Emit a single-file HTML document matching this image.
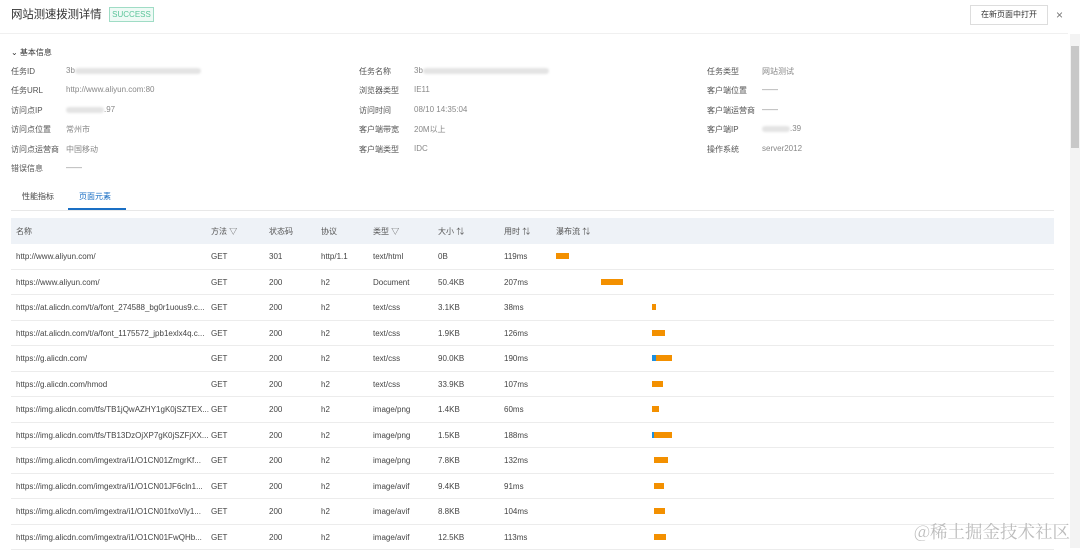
<!DOCTYPE html>
<html><head><meta charset="utf-8"><style>
*{margin:0;padding:0;box-sizing:border-box}
body{width:1080px;height:548px;overflow:hidden;background:#fff;font-family:"Liberation Sans","Noto Sans CJK SC",sans-serif;color:#333;position:relative}
.a{position:absolute;white-space:nowrap}
.s{font-size:8px}
.l{color:#555;font-size:8px}
.v{color:#888;font-size:8px}
.blur{display:inline-block;height:6px;background:#e4e4e4;border-radius:3px;vertical-align:middle;filter:blur(1px)}
.row{position:absolute;left:11px;width:1043px;height:25.5px;border-bottom:1px solid #ececec;font-size:8px;color:#444}
.row span{position:absolute;top:8px;white-space:nowrap}
.bar{position:absolute;top:9px;height:6px;background:#f39000}
.blue{background:#1e90e0}
</style></head><body>
<div class="a" style="left:11px;top:6px;font-size:11.5px;color:#333;letter-spacing:-0.2px">网站测速拨测详情</div>
<div class="a" style="left:109px;top:7px;width:45px;height:15px;border:1px solid #9fdcc5;background:#eefaf5;color:#5bc49a;font-size:8px;line-height:13px;text-align:center">SUCCESS</div>
<div class="a" style="left:970px;top:5px;width:78px;height:20px;border:1px solid #ddd;font-size:8px;line-height:18px;text-align:center;color:#333">在新页面中打开</div>
<div class="a" style="left:1056px;top:8px;font-size:12px;color:#777">×</div>
<div class="a" style="left:0;top:33px;width:1068px;height:1px;background:#f0f0f0"></div>
<div class="a" style="left:1070px;top:34px;width:10px;height:514px;background:#f3f3f3"></div>
<div class="a" style="left:1071px;top:46px;width:8px;height:102px;background:#c8c8c8"></div>

<div class="a s" style="left:11px;top:47px;color:#333">⌄ 基本信息</div>
<div class="a l" style="left:11px;top:66px">任务ID</div><div class="a v" style="left:66px;top:66px">3b<span class="blur" style="width:126px"></span></div>
<div class="a l" style="left:11px;top:85px">任务URL</div><div class="a v" style="left:66px;top:85px">http://www.aliyun.com:80</div>
<div class="a l" style="left:11px;top:105px">访问点IP</div><div class="a v" style="left:66px;top:105px"><span class="blur" style="width:38px"></span>.97</div>
<div class="a l" style="left:11px;top:124px">访问点位置</div><div class="a v" style="left:66px;top:124px">常州市</div>
<div class="a l" style="left:11px;top:144px">访问点运营商</div><div class="a v" style="left:66px;top:144px">中国移动</div>
<div class="a l" style="left:11px;top:163px">错误信息</div><div class="a v" style="left:66px;top:163px">——</div>

<div class="a l" style="left:359px;top:66px">任务名称</div><div class="a v" style="left:414px;top:66px">3b<span class="blur" style="width:126px"></span></div>
<div class="a l" style="left:359px;top:85px">浏览器类型</div><div class="a v" style="left:414px;top:85px">IE11</div>
<div class="a l" style="left:359px;top:105px">访问时间</div><div class="a v" style="left:414px;top:105px">08/10 14:35:04</div>
<div class="a l" style="left:359px;top:124px">客户端带宽</div><div class="a v" style="left:414px;top:124px">20M以上</div>
<div class="a l" style="left:359px;top:144px">客户端类型</div><div class="a v" style="left:414px;top:144px">IDC</div>

<div class="a l" style="left:707px;top:66px">任务类型</div><div class="a v" style="left:762px;top:66px">网站测试</div>
<div class="a l" style="left:707px;top:85px">客户端位置</div><div class="a v" style="left:762px;top:85px">——</div>
<div class="a l" style="left:707px;top:105px">客户端运营商</div><div class="a v" style="left:762px;top:105px">——</div>
<div class="a l" style="left:707px;top:124px">客户端IP</div><div class="a v" style="left:762px;top:124px"><span class="blur" style="width:28px"></span>.39</div>
<div class="a l" style="left:707px;top:144px">操作系统</div><div class="a v" style="left:762px;top:144px">server2012</div>

<div class="a s" style="left:22px;top:191px;color:#444">性能指标</div>
<div class="a s" style="left:79px;top:191px;color:#1a6fc4">页面元素</div>
<div class="a" style="left:68px;top:208px;width:58px;height:2px;background:#1a6fc4"></div>
<div class="a" style="left:11px;top:210px;width:1043px;height:1px;background:#e8e8e8"></div>

<div class="row" style="top:218px;background:#eef2f7;border:none;color:#555">
<span style="left:5px">名称</span><span style="left:200px">方法 ▽</span><span style="left:258px">状态码</span><span style="left:310px">协议</span><span style="left:362px">类型 ▽</span><span style="left:427px">大小 ⇅</span><span style="left:493px">用时 ⇅</span><span style="left:545px">瀑布流 ⇅</span></div>

<div class="row" style="top:244px"><span style="left:5px">http://www.aliyun.com/</span><span style="left:200px">GET</span><span style="left:258px">301</span><span style="left:310px">http/1.1</span><span style="left:362px">text/html</span><span style="left:427px">0B</span><span style="left:493px">119ms</span><div class="bar" style="left:545px;width:13px"></div></div>
<div class="row" style="top:269.5px"><span style="left:5px">https://www.aliyun.com/</span><span style="left:200px">GET</span><span style="left:258px">200</span><span style="left:310px">h2</span><span style="left:362px">Document</span><span style="left:427px">50.4KB</span><span style="left:493px">207ms</span><div class="bar" style="left:590px;width:22px"></div></div>
<div class="row" style="top:295px"><span style="left:5px">https://at.alicdn.com/t/a/font_274588_bg0r1uous9.c...</span><span style="left:200px">GET</span><span style="left:258px">200</span><span style="left:310px">h2</span><span style="left:362px">text/css</span><span style="left:427px">3.1KB</span><span style="left:493px">38ms</span><div class="bar" style="left:641px;width:4px"></div></div>
<div class="row" style="top:320.5px"><span style="left:5px">https://at.alicdn.com/t/a/font_1175572_jpb1exlx4q.c...</span><span style="left:200px">GET</span><span style="left:258px">200</span><span style="left:310px">h2</span><span style="left:362px">text/css</span><span style="left:427px">1.9KB</span><span style="left:493px">126ms</span><div class="bar" style="left:641px;width:13px"></div></div>
<div class="row" style="top:346px"><span style="left:5px">https://g.alicdn.com/</span><span style="left:200px">GET</span><span style="left:258px">200</span><span style="left:310px">h2</span><span style="left:362px">text/css</span><span style="left:427px">90.0KB</span><span style="left:493px">190ms</span><div class="bar blue" style="left:641px;width:4px"></div><div class="bar" style="left:645px;width:16px"></div></div>
<div class="row" style="top:371.5px"><span style="left:5px">https://g.alicdn.com/hmod</span><span style="left:200px">GET</span><span style="left:258px">200</span><span style="left:310px">h2</span><span style="left:362px">text/css</span><span style="left:427px">33.9KB</span><span style="left:493px">107ms</span><div class="bar" style="left:641px;width:11px"></div></div>
<div class="row" style="top:397px"><span style="left:5px">https://img.alicdn.com/tfs/TB1jQwAZHY1gK0jSZTEX...</span><span style="left:200px">GET</span><span style="left:258px">200</span><span style="left:310px">h2</span><span style="left:362px">image/png</span><span style="left:427px">1.4KB</span><span style="left:493px">60ms</span><div class="bar" style="left:641px;width:7px"></div></div>
<div class="row" style="top:422.5px"><span style="left:5px">https://img.alicdn.com/tfs/TB13DzOjXP7gK0jSZFjXX...</span><span style="left:200px">GET</span><span style="left:258px">200</span><span style="left:310px">h2</span><span style="left:362px">image/png</span><span style="left:427px">1.5KB</span><span style="left:493px">188ms</span><div class="bar blue" style="left:641px;width:2px"></div><div class="bar" style="left:643px;width:18px"></div></div>
<div class="row" style="top:448px"><span style="left:5px">https://img.alicdn.com/imgextra/i1/O1CN01ZmgrKf...</span><span style="left:200px">GET</span><span style="left:258px">200</span><span style="left:310px">h2</span><span style="left:362px">image/png</span><span style="left:427px">7.8KB</span><span style="left:493px">132ms</span><div class="bar" style="left:643px;width:14px"></div></div>
<div class="row" style="top:473.5px"><span style="left:5px">https://img.alicdn.com/imgextra/i1/O1CN01JF6cln1...</span><span style="left:200px">GET</span><span style="left:258px">200</span><span style="left:310px">h2</span><span style="left:362px">image/avif</span><span style="left:427px">9.4KB</span><span style="left:493px">91ms</span><div class="bar" style="left:643px;width:10px"></div></div>
<div class="row" style="top:499px"><span style="left:5px">https://img.alicdn.com/imgextra/i1/O1CN01fxoVly1...</span><span style="left:200px">GET</span><span style="left:258px">200</span><span style="left:310px">h2</span><span style="left:362px">image/avif</span><span style="left:427px">8.8KB</span><span style="left:493px">104ms</span><div class="bar" style="left:643px;width:11px"></div></div>
<div class="row" style="top:524.5px"><span style="left:5px">https://img.alicdn.com/imgextra/i1/O1CN01FwQHb...</span><span style="left:200px">GET</span><span style="left:258px">200</span><span style="left:310px">h2</span><span style="left:362px">image/avif</span><span style="left:427px">12.5KB</span><span style="left:493px">113ms</span><div class="bar" style="left:643px;width:12px"></div></div>

<div class="a" style="left:914px;top:519px;font-size:17.5px;color:#bbb;font-family:'Noto Serif CJK SC','Noto Sans CJK SC',serif">@稀土掘金技术社区</div>
</body></html>
